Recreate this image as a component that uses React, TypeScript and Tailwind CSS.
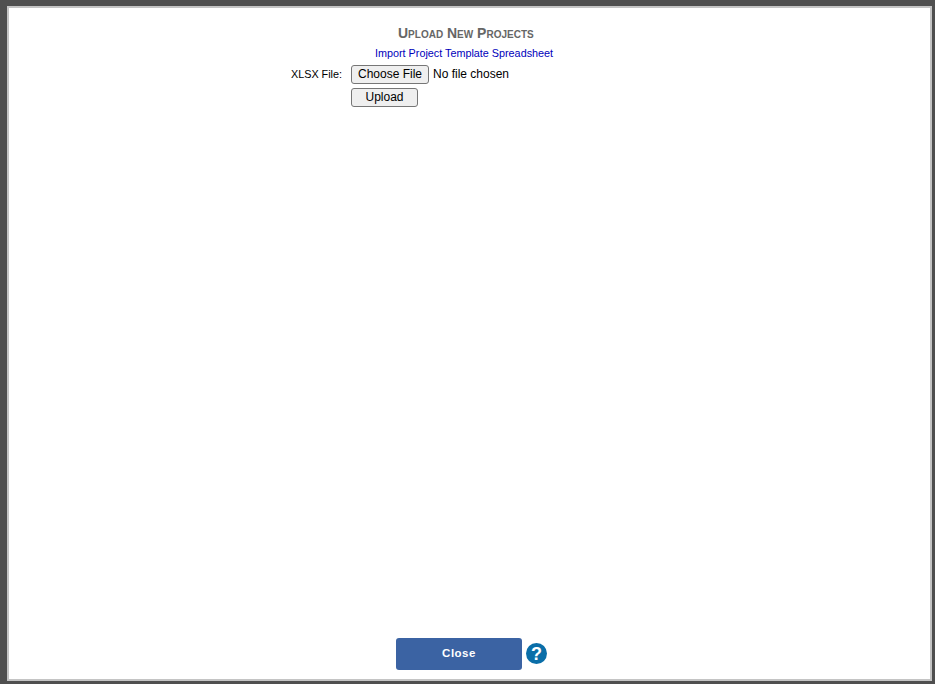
export default function App() {
  return (
    <div className="h-[684px] w-[935px] bg-[#4f4f4f] pt-[6px] pr-[3px] pb-[3px] pl-[7px] font-['Liberation_Sans',Arial,sans-serif]">
      <div className="flex h-full flex-col border-2 border-[#c4c4c4] bg-white">
        {/* Upload form */}
        <div className="flex-1">
          <h2 className="mt-[17px] ml-[389px] text-[14px] leading-[16px] font-bold whitespace-nowrap text-[#666666] [font-variant:small-caps]">
            Upload New Projects
          </h2>
          <div className="mt-[6px] ml-[366px] text-[10.8px] leading-[13px]">
            <a href="#" className="text-[#0000bb]">Import Project Template Spreadsheet</a>
          </div>
          <div className="mt-[5px] flex items-start">
            <label className="ml-[282px] w-[60px] pt-[2px] text-[10.8px] leading-[14px] text-black">XLSX File:</label>
            <div className="flex flex-col items-start">
              <div className="flex items-center">
                <button className="h-[19px] w-[78px] rounded-[3px] border border-[#767676] bg-[#efefef] text-[12px] leading-[15px] text-black">
                  Choose File
                </button>
                <span className="ml-[4px] text-[12px] leading-[15px] text-black">No file chosen</span>
              </div>
              <button className="mt-[4px] h-[19px] w-[67px] rounded-[3px] border border-[#767676] bg-[#efefef] text-[12px] leading-[15px] text-black">
                Upload
              </button>
            </div>
          </div>
        </div>

        {/* Footer */}
        <div className="flex items-center pb-[9px] pl-[387px]">
          <button className="h-[32px] w-[126px] rounded-[3px] bg-[#3b63a3] text-[11.5px] font-bold tracking-[0.5px] text-white">
            Close
          </button>
          <svg className="mb-[1px] ml-[4px]" width="21" height="21" viewBox="0 0 21 21">
            <circle cx="10.5" cy="10.5" r="10.5" fill="#0a6ea8" />
            <text x="10.5" y="16.5" textAnchor="middle" fontSize="18" fontWeight="700" fill="#fff" fontFamily="Liberation Sans, Arial, sans-serif">?</text>
          </svg>
        </div>
      </div>
    </div>
  )
}
